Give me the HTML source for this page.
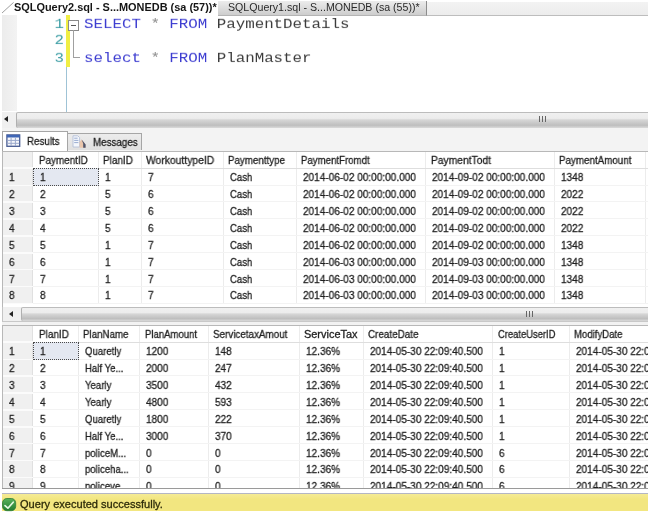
<!DOCTYPE html>
<html><head><meta charset="utf-8">
<style>
*{margin:0;padding:0;box-sizing:border-box}
html,body{width:650px;height:513px;overflow:hidden;background:#fff}
body{font-family:"Liberation Sans",sans-serif;position:relative;color:#222}
.abs{position:absolute}
.grid .c,.rtxt,#tab1,#tab2 span,.code,.ln,#status span{will-change:transform;filter:blur(0.3px)}
/* top tabs */
#tabbar{left:218px;top:1.8px;width:430px;height:13.8px;background:linear-gradient(#f3f3f3,#ececec);border-bottom:1.7px solid #bdbdbd}
#tab1{left:14.2px;top:1px;font-weight:bold;font-size:10.93px;line-height:13px;color:#151515;white-space:nowrap}
#tab2{left:218px;top:1.4px;width:208.8px;height:14.2px;background:linear-gradient(#ececec,#cdcdcd);border-right:1px solid #8c8c8c;border-bottom:1.4px solid #b4b4b4}
#tab2 span{position:absolute;left:10px;top:-0.4px;font-size:10.62px;line-height:13px;color:#2a2a2a;white-space:nowrap}
/* editor */
#edmargin{left:2px;top:15.2px;width:14.8px;height:96px;background:linear-gradient(90deg,#ececec,#f3f3f3)}
#ybar{left:66px;top:15px;width:4px;height:52px;background:#f0ee44}
#vline{left:66px;top:67px;width:1px;height:45px;background:#9fc3d6}
.ln{left:50px;width:14px;text-align:right;font-family:"Liberation Mono",monospace;font-size:15.8px;line-height:17px;color:#3f9fa6;transform:scaleY(0.85);transform-origin:0 12.7px}
.code{left:84px;font-family:"Liberation Mono",monospace;font-size:15.8px;line-height:17px;color:#3c3c3c;white-space:pre;transform:scaleY(0.85);transform-origin:0 12.7px}
.kw{color:#3c3cd0}
.op{color:#8a8a8a}
#cbox{left:68.3px;top:19.5px;width:11px;height:11px;border:1px solid #8a8a8a;background:#fff}
#cbox i{position:absolute;left:2px;top:4px;width:5px;height:1px;background:#555}
#cl1{left:73.4px;top:30px;width:1px;height:27.5px;background:#a0a0a0}
#cl2{left:73.4px;top:56.8px;width:6.5px;height:1px;background:#a0a0a0}
/* h scrollbars */
.hs{left:2px;width:646px;height:15.6px;background:#f0f0f0}
.hs .thumb{position:absolute;top:0;right:0;height:15.6px;border-top:1.6px solid #bcbcbc;border-left:1px solid #b0b0b0;border-radius:2px 0 0 2px;background:linear-gradient(#f0f0f0 0,#ececec 36%,#d6d6d6 46%,#bebebe 82%,#dadada 100%)}
.hs .arr{position:absolute;top:4px;width:0;height:0;border-top:3.5px solid transparent;border-bottom:3.5px solid transparent;border-right:4px solid #222}
.hs .grip{position:absolute;top:4px;width:9px;height:6px;background:repeating-linear-gradient(90deg,#666 0,#666 1.1px,transparent 1.1px,transparent 3.2px)}
/* result tabs */
#rtbar{left:2px;top:127.8px;width:646px;height:23.2px;background:#f3f3f3}
#rtab1{left:2px;top:131px;width:65.5px;height:20px;background:#fff;border:1px solid #a6a6a6;border-bottom:none}
#rtab2{left:67px;top:132.8px;width:74.5px;height:17.7px;background:linear-gradient(#ececec,#e0e0e0);border:1px solid #a6a6a6;border-bottom:none}
.rtxt{font-size:10.9px;line-height:12px;color:#1c1c1c;white-space:nowrap;transform:scaleX(0.9);transform-origin:0 0;-webkit-text-stroke:0.3px #222}
/* grid */
.grid{left:0;width:648px;overflow:hidden;background:#fff;font-size:10.9px;color:#1e1e1e}
.grid .c{position:absolute;white-space:nowrap;transform:scaleX(0.9);transform-origin:0 0;-webkit-text-stroke:0.3px #222}
.grid .d{transform:scaleX(0.923)}
.grid .t{transform:scaleX(0.882)}
.grid .v{position:absolute;top:0;width:1px;background:#ececec}
.grid .h{position:absolute;left:33px;width:615px;height:1px;background:#f3f3f3}
.grid .rh{position:absolute;left:2px;top:0;width:31px;background:#f0f0f0;border-right:1px solid #e0e0e0}
.grid .rsep{position:absolute;left:3px;width:30px;height:1.5px;background:#fbfbfb}
.grid .sel{position:absolute;background:#e4e8f1;border:1px dotted #4a4a4a}
.grid .bl{position:absolute;left:2px;top:0;width:1px;background:#b8b8b8}
.grid .bt{position:absolute;left:2px;top:0;width:646px;height:1px;background:#b8b8b8}
#gbot{left:2px;top:487.6px;width:646px;height:1px;background:#9a9a9a}
#sline{left:2px;top:492.8px;width:645.7px;height:1px;background:#b4b6c4}
#status{left:2px;top:493.8px;width:645.7px;height:17px;background:linear-gradient(#f5eb96,#f2e680 30%,#f2e680)}
#status span{position:absolute;left:17.8px;top:4.7px;font-size:11.05px;line-height:13px;color:#2e2c0a;white-space:nowrap;-webkit-text-stroke:0.3px #2e2c0a}
</style></head><body>
<div id="tabbar" class="abs"></div>
<svg class="abs" style="left:0;top:0" width="16" height="15"><line x1="2" y1="13" x2="13.6" y2="2.4" stroke="#a0a0a0" stroke-width="1"/></svg>
<div id="tab2" class="abs"><span>SQLQuery1.sql - S...MONEDB (sa (55))*</span></div>
<div id="tab1" class="abs">SQLQuery2.sql - S...MONEDB (sa (57))*</div>

<div id="edmargin" class="abs"></div>
<div id="ybar" class="abs"></div>
<div id="vline" class="abs"></div>
<div class="abs ln" style="top:16.2px">1</div>
<div class="abs ln" style="top:32.2px">2</div>
<div class="abs ln" style="top:49.9px">3</div>
<div class="abs code" style="top:16.2px"><span class="kw">SELECT</span> <span class="op">*</span> <span class="kw">FROM</span> PaymentDetails</div>
<div class="abs code" style="top:49.9px"><span class="kw">select</span> <span class="op">*</span> <span class="kw">FROM</span> PlanMaster</div>
<div id="cbox" class="abs"><i></i></div>
<div id="cl1" class="abs"></div><div id="cl2" class="abs"></div>

<div class="abs hs" style="top:112.4px"><div class="arr" style="left:2.3px"></div><div class="thumb" style="left:14.2px"></div><div class="grip" style="left:537px"></div></div>

<div id="rtbar" class="abs"></div>
<div id="rtab2" class="abs"></div>
<div id="rtab1" class="abs"></div>
<svg class="abs" style="left:6.1px;top:133.8px" width="15" height="14" viewBox="0 0 15 14">
<rect x="0.9" y="0.9" width="12.8" height="11.4" fill="#f6f7fb" stroke="#485c92" stroke-width="1.3"/>
<rect x="0.9" y="0.9" width="12.8" height="2.6" fill="#3f66b6"/>
<path d="M1.4 6.4H13.2M1.4 9.3H13.2M5.1 3.5V12M9.4 3.5V12" stroke="#9aa8cc" stroke-width="1" fill="none"/>
</svg>
<svg class="abs" style="left:72px;top:135px" width="15" height="14" viewBox="0 0 15 14">
<path d="M1 0.8H5.8L7.6 2.6V12H1Z" fill="#f4f7fc" stroke="#b4c0d8" stroke-width="0.9"/>
<path d="M2.2 3.2H5.6M2.2 5.4H6.4M2.2 7.6H6.4" stroke="#8fa4cc" stroke-width="0.9"/>
<path d="M7.6 12.8V7.2L9.6 4.6L13.6 9.4V12.8Z" fill="#eac6ac"/>
<path d="M9.6 4.6L13.6 9.4V12.8H11.2V8.6Z" fill="#4d546c"/>
</svg>
<div class="abs rtxt" style="left:27.2px;top:134.9px">Results</div>
<div class="abs rtxt" style="left:92.6px;top:136.3px">Messages</div>

<div class="abs grid" style="top:151px;height:155.60000000000002px">
<div class="rh" style="height:152.74px"></div>
<div class="rsep" style="top:16.20px"></div>
<div class="rsep" style="top:33.58px"></div>
<div class="rsep" style="top:50.46px"></div>
<div class="rsep" style="top:67.34px"></div>
<div class="rsep" style="top:84.22px"></div>
<div class="rsep" style="top:101.10px"></div>
<div class="rsep" style="top:117.98px"></div>
<div class="rsep" style="top:134.86px"></div>
<div class="rsep" style="top:151.74px"></div>
<div class="v" style="left:97.8px;height:152.74px"></div>
<div class="v" style="left:140.8px;height:152.74px"></div>
<div class="v" style="left:222.8px;height:152.74px"></div>
<div class="v" style="left:295.8px;height:152.74px"></div>
<div class="v" style="left:425.3px;height:152.74px"></div>
<div class="v" style="left:553.8px;height:152.74px"></div>
<div class="v" style="left:645px;height:152.74px"></div>
<div class="h" style="top:16.70px;background:#dedede"></div>
<div class="h" style="top:33.58px"></div>
<div class="h" style="top:50.46px"></div>
<div class="h" style="top:67.34px"></div>
<div class="h" style="top:84.22px"></div>
<div class="h" style="top:101.10px"></div>
<div class="h" style="top:117.98px"></div>
<div class="h" style="top:134.86px"></div>
<div class="h" style="top:151.74px"></div>
<div class="c" style="left:38.5px;top:0.6px;line-height:17.7px;transform:scaleX(0.905)">PaymentID</div>
<div class="c" style="left:103px;top:0.6px;line-height:17.7px;transform:scaleX(0.917)">PlanID</div>
<div class="c" style="left:146px;top:0.6px;line-height:17.7px;transform:scaleX(0.949)">WorkouttypeID</div>
<div class="c" style="left:228px;top:0.6px;line-height:17.7px;transform:scaleX(0.896)">Paymenttype</div>
<div class="c" style="left:301px;top:0.6px;line-height:17.7px;transform:scaleX(0.886)">PaymentFromdt</div>
<div class="c" style="left:430.5px;top:0.6px;line-height:17.7px;transform:scaleX(0.943)">PaymentTodt</div>
<div class="c" style="left:559px;top:0.6px;line-height:17.7px;transform:scaleX(0.900)">PaymentAmount</div>
<div class="sel" style="left:33.2px;top:17.30px;width:65.4px;height:18.08px"></div>
<div class="c d" style="left:8.6px;top:18.30px;line-height:16.88px">1</div>
<div class="c d" style="left:40.2px;top:18.30px;line-height:16.88px">1</div>
<div class="c d" style="left:104.7px;top:18.30px;line-height:16.88px">1</div>
<div class="c d" style="left:147.7px;top:18.30px;line-height:16.88px">7</div>
<div class="c t" style="left:229.7px;top:18.30px;line-height:16.88px">Cash</div>
<div class="c d" style="left:302.7px;top:18.30px;line-height:16.88px">2014-06-02 00:00:00.000</div>
<div class="c d" style="left:432.2px;top:18.30px;line-height:16.88px">2014-09-02 00:00:00.000</div>
<div class="c d" style="left:560.7px;top:18.30px;line-height:16.88px">1348</div>
<div class="c d" style="left:8.6px;top:35.18px;line-height:16.88px">2</div>
<div class="c d" style="left:40.2px;top:35.18px;line-height:16.88px">2</div>
<div class="c d" style="left:104.7px;top:35.18px;line-height:16.88px">5</div>
<div class="c d" style="left:147.7px;top:35.18px;line-height:16.88px">6</div>
<div class="c t" style="left:229.7px;top:35.18px;line-height:16.88px">Cash</div>
<div class="c d" style="left:302.7px;top:35.18px;line-height:16.88px">2014-06-02 00:00:00.000</div>
<div class="c d" style="left:432.2px;top:35.18px;line-height:16.88px">2014-09-02 00:00:00.000</div>
<div class="c d" style="left:560.7px;top:35.18px;line-height:16.88px">2022</div>
<div class="c d" style="left:8.6px;top:52.06px;line-height:16.88px">3</div>
<div class="c d" style="left:40.2px;top:52.06px;line-height:16.88px">3</div>
<div class="c d" style="left:104.7px;top:52.06px;line-height:16.88px">5</div>
<div class="c d" style="left:147.7px;top:52.06px;line-height:16.88px">6</div>
<div class="c t" style="left:229.7px;top:52.06px;line-height:16.88px">Cash</div>
<div class="c d" style="left:302.7px;top:52.06px;line-height:16.88px">2014-06-02 00:00:00.000</div>
<div class="c d" style="left:432.2px;top:52.06px;line-height:16.88px">2014-09-02 00:00:00.000</div>
<div class="c d" style="left:560.7px;top:52.06px;line-height:16.88px">2022</div>
<div class="c d" style="left:8.6px;top:68.94px;line-height:16.88px">4</div>
<div class="c d" style="left:40.2px;top:68.94px;line-height:16.88px">4</div>
<div class="c d" style="left:104.7px;top:68.94px;line-height:16.88px">5</div>
<div class="c d" style="left:147.7px;top:68.94px;line-height:16.88px">6</div>
<div class="c t" style="left:229.7px;top:68.94px;line-height:16.88px">Cash</div>
<div class="c d" style="left:302.7px;top:68.94px;line-height:16.88px">2014-06-02 00:00:00.000</div>
<div class="c d" style="left:432.2px;top:68.94px;line-height:16.88px">2014-09-02 00:00:00.000</div>
<div class="c d" style="left:560.7px;top:68.94px;line-height:16.88px">2022</div>
<div class="c d" style="left:8.6px;top:85.82px;line-height:16.88px">5</div>
<div class="c d" style="left:40.2px;top:85.82px;line-height:16.88px">5</div>
<div class="c d" style="left:104.7px;top:85.82px;line-height:16.88px">1</div>
<div class="c d" style="left:147.7px;top:85.82px;line-height:16.88px">7</div>
<div class="c t" style="left:229.7px;top:85.82px;line-height:16.88px">Cash</div>
<div class="c d" style="left:302.7px;top:85.82px;line-height:16.88px">2014-06-02 00:00:00.000</div>
<div class="c d" style="left:432.2px;top:85.82px;line-height:16.88px">2014-09-02 00:00:00.000</div>
<div class="c d" style="left:560.7px;top:85.82px;line-height:16.88px">1348</div>
<div class="c d" style="left:8.6px;top:102.70px;line-height:16.88px">6</div>
<div class="c d" style="left:40.2px;top:102.70px;line-height:16.88px">6</div>
<div class="c d" style="left:104.7px;top:102.70px;line-height:16.88px">1</div>
<div class="c d" style="left:147.7px;top:102.70px;line-height:16.88px">7</div>
<div class="c t" style="left:229.7px;top:102.70px;line-height:16.88px">Cash</div>
<div class="c d" style="left:302.7px;top:102.70px;line-height:16.88px">2014-06-03 00:00:00.000</div>
<div class="c d" style="left:432.2px;top:102.70px;line-height:16.88px">2014-09-03 00:00:00.000</div>
<div class="c d" style="left:560.7px;top:102.70px;line-height:16.88px">1348</div>
<div class="c d" style="left:8.6px;top:119.58px;line-height:16.88px">7</div>
<div class="c d" style="left:40.2px;top:119.58px;line-height:16.88px">7</div>
<div class="c d" style="left:104.7px;top:119.58px;line-height:16.88px">1</div>
<div class="c d" style="left:147.7px;top:119.58px;line-height:16.88px">7</div>
<div class="c t" style="left:229.7px;top:119.58px;line-height:16.88px">Cash</div>
<div class="c d" style="left:302.7px;top:119.58px;line-height:16.88px">2014-06-03 00:00:00.000</div>
<div class="c d" style="left:432.2px;top:119.58px;line-height:16.88px">2014-09-03 00:00:00.000</div>
<div class="c d" style="left:560.7px;top:119.58px;line-height:16.88px">1348</div>
<div class="c d" style="left:8.6px;top:136.46px;line-height:16.88px">8</div>
<div class="c d" style="left:40.2px;top:136.46px;line-height:16.88px">8</div>
<div class="c d" style="left:104.7px;top:136.46px;line-height:16.88px">1</div>
<div class="c d" style="left:147.7px;top:136.46px;line-height:16.88px">7</div>
<div class="c t" style="left:229.7px;top:136.46px;line-height:16.88px">Cash</div>
<div class="c d" style="left:302.7px;top:136.46px;line-height:16.88px">2014-06-03 00:00:00.000</div>
<div class="c d" style="left:432.2px;top:136.46px;line-height:16.88px">2014-09-03 00:00:00.000</div>
<div class="c d" style="left:560.7px;top:136.46px;line-height:16.88px">1348</div>
<div class="bl" style="height:155.60000000000002px"></div><div class="bt"></div>
</div>
<div class="abs" style="left:2px;top:322px;width:646px;height:3px;background:#f2f2f2"></div>
<div class="abs hs" style="top:307px;height:15px;border-left:1px solid #c4c4c4;border-bottom:1px solid #c8c8c8;left:2px;width:646px"><div class="arr" style="left:6px"></div><div class="thumb" style="left:17.5px;height:14px;top:0.4px;border-radius:2px 0 0 2px"></div><div class="grip" style="left:522.5px"></div></div>
<div class="abs grid" style="top:325px;height:163.5px">
<div class="rh" style="height:163.50px"></div>
<div class="rsep" style="top:16.20px"></div>
<div class="rsep" style="top:33.58px"></div>
<div class="rsep" style="top:50.46px"></div>
<div class="rsep" style="top:67.34px"></div>
<div class="rsep" style="top:84.22px"></div>
<div class="rsep" style="top:101.10px"></div>
<div class="rsep" style="top:117.98px"></div>
<div class="rsep" style="top:134.86px"></div>
<div class="rsep" style="top:151.74px"></div>
<div class="rsep" style="top:168.62px"></div>
<div class="v" style="left:77.8px;height:163.50px"></div>
<div class="v" style="left:139.3px;height:163.50px"></div>
<div class="v" style="left:207.8px;height:163.50px"></div>
<div class="v" style="left:298.8px;height:163.50px"></div>
<div class="v" style="left:362.8px;height:163.50px"></div>
<div class="v" style="left:492.3px;height:163.50px"></div>
<div class="v" style="left:568.8px;height:163.50px"></div>
<div class="h" style="top:16.70px;background:#dedede"></div>
<div class="h" style="top:33.58px"></div>
<div class="h" style="top:50.46px"></div>
<div class="h" style="top:67.34px"></div>
<div class="h" style="top:84.22px"></div>
<div class="h" style="top:101.10px"></div>
<div class="h" style="top:117.98px"></div>
<div class="h" style="top:134.86px"></div>
<div class="h" style="top:151.74px"></div>
<div class="h" style="top:168.62px"></div>
<div class="c" style="left:38.5px;top:0.6px;line-height:17.7px;transform:scaleX(0.917)">PlanID</div>
<div class="c" style="left:83px;top:0.6px;line-height:17.7px;transform:scaleX(0.894)">PlanName</div>
<div class="c" style="left:144.5px;top:0.6px;line-height:17.7px;transform:scaleX(0.877)">PlanAmount</div>
<div class="c" style="left:213px;top:0.6px;line-height:17.7px;transform:scaleX(0.904)">ServicetaxAmout</div>
<div class="c" style="left:304px;top:0.6px;line-height:17.7px;transform:scaleX(1.004)">ServiceTax</div>
<div class="c" style="left:368px;top:0.6px;line-height:17.7px;transform:scaleX(0.906)">CreateDate</div>
<div class="c" style="left:497.5px;top:0.6px;line-height:17.7px;transform:scaleX(0.863)">CreateUserID</div>
<div class="c" style="left:574px;top:0.6px;line-height:17.7px;transform:scaleX(0.880)">ModifyDate</div>
<div class="sel" style="left:33.2px;top:17.30px;width:45.4px;height:18.08px"></div>
<div class="c d" style="left:8.6px;top:18.30px;line-height:16.88px">1</div>
<div class="c d" style="left:40.2px;top:18.30px;line-height:16.88px">1</div>
<div class="c t" style="left:84.7px;top:18.30px;line-height:16.88px">Quaretly</div>
<div class="c d" style="left:146.2px;top:18.30px;line-height:16.88px">1200</div>
<div class="c d" style="left:214.7px;top:18.30px;line-height:16.88px">148</div>
<div class="c d" style="left:305.7px;top:18.30px;line-height:16.88px">12.36%</div>
<div class="c d" style="left:369.7px;top:18.30px;line-height:16.88px">2014-05-30 22:09:40.500</div>
<div class="c d" style="left:499.2px;top:18.30px;line-height:16.88px">1</div>
<div class="c d" style="left:575.7px;top:18.30px;line-height:16.88px">2014-05-30 22:09:40.500</div>
<div class="c d" style="left:8.6px;top:35.18px;line-height:16.88px">2</div>
<div class="c d" style="left:40.2px;top:35.18px;line-height:16.88px">2</div>
<div class="c t" style="left:84.7px;top:35.18px;line-height:16.88px">Half Ye...</div>
<div class="c d" style="left:146.2px;top:35.18px;line-height:16.88px">2000</div>
<div class="c d" style="left:214.7px;top:35.18px;line-height:16.88px">247</div>
<div class="c d" style="left:305.7px;top:35.18px;line-height:16.88px">12.36%</div>
<div class="c d" style="left:369.7px;top:35.18px;line-height:16.88px">2014-05-30 22:09:40.500</div>
<div class="c d" style="left:499.2px;top:35.18px;line-height:16.88px">1</div>
<div class="c d" style="left:575.7px;top:35.18px;line-height:16.88px">2014-05-30 22:09:40.500</div>
<div class="c d" style="left:8.6px;top:52.06px;line-height:16.88px">3</div>
<div class="c d" style="left:40.2px;top:52.06px;line-height:16.88px">3</div>
<div class="c t" style="left:84.7px;top:52.06px;line-height:16.88px">Yearly</div>
<div class="c d" style="left:146.2px;top:52.06px;line-height:16.88px">3500</div>
<div class="c d" style="left:214.7px;top:52.06px;line-height:16.88px">432</div>
<div class="c d" style="left:305.7px;top:52.06px;line-height:16.88px">12.36%</div>
<div class="c d" style="left:369.7px;top:52.06px;line-height:16.88px">2014-05-30 22:09:40.500</div>
<div class="c d" style="left:499.2px;top:52.06px;line-height:16.88px">1</div>
<div class="c d" style="left:575.7px;top:52.06px;line-height:16.88px">2014-05-30 22:09:40.500</div>
<div class="c d" style="left:8.6px;top:68.94px;line-height:16.88px">4</div>
<div class="c d" style="left:40.2px;top:68.94px;line-height:16.88px">4</div>
<div class="c t" style="left:84.7px;top:68.94px;line-height:16.88px">Yearly</div>
<div class="c d" style="left:146.2px;top:68.94px;line-height:16.88px">4800</div>
<div class="c d" style="left:214.7px;top:68.94px;line-height:16.88px">593</div>
<div class="c d" style="left:305.7px;top:68.94px;line-height:16.88px">12.36%</div>
<div class="c d" style="left:369.7px;top:68.94px;line-height:16.88px">2014-05-30 22:09:40.500</div>
<div class="c d" style="left:499.2px;top:68.94px;line-height:16.88px">1</div>
<div class="c d" style="left:575.7px;top:68.94px;line-height:16.88px">2014-05-30 22:09:40.500</div>
<div class="c d" style="left:8.6px;top:85.82px;line-height:16.88px">5</div>
<div class="c d" style="left:40.2px;top:85.82px;line-height:16.88px">5</div>
<div class="c t" style="left:84.7px;top:85.82px;line-height:16.88px">Quaretly</div>
<div class="c d" style="left:146.2px;top:85.82px;line-height:16.88px">1800</div>
<div class="c d" style="left:214.7px;top:85.82px;line-height:16.88px">222</div>
<div class="c d" style="left:305.7px;top:85.82px;line-height:16.88px">12.36%</div>
<div class="c d" style="left:369.7px;top:85.82px;line-height:16.88px">2014-05-30 22:09:40.500</div>
<div class="c d" style="left:499.2px;top:85.82px;line-height:16.88px">1</div>
<div class="c d" style="left:575.7px;top:85.82px;line-height:16.88px">2014-05-30 22:09:40.500</div>
<div class="c d" style="left:8.6px;top:102.70px;line-height:16.88px">6</div>
<div class="c d" style="left:40.2px;top:102.70px;line-height:16.88px">6</div>
<div class="c t" style="left:84.7px;top:102.70px;line-height:16.88px">Half Ye...</div>
<div class="c d" style="left:146.2px;top:102.70px;line-height:16.88px">3000</div>
<div class="c d" style="left:214.7px;top:102.70px;line-height:16.88px">370</div>
<div class="c d" style="left:305.7px;top:102.70px;line-height:16.88px">12.36%</div>
<div class="c d" style="left:369.7px;top:102.70px;line-height:16.88px">2014-05-30 22:09:40.500</div>
<div class="c d" style="left:499.2px;top:102.70px;line-height:16.88px">1</div>
<div class="c d" style="left:575.7px;top:102.70px;line-height:16.88px">2014-05-30 22:09:40.500</div>
<div class="c d" style="left:8.6px;top:119.58px;line-height:16.88px">7</div>
<div class="c d" style="left:40.2px;top:119.58px;line-height:16.88px">7</div>
<div class="c t" style="left:84.7px;top:119.58px;line-height:16.88px">policeM...</div>
<div class="c d" style="left:146.2px;top:119.58px;line-height:16.88px">0</div>
<div class="c d" style="left:214.7px;top:119.58px;line-height:16.88px">0</div>
<div class="c d" style="left:305.7px;top:119.58px;line-height:16.88px">12.36%</div>
<div class="c d" style="left:369.7px;top:119.58px;line-height:16.88px">2014-05-30 22:09:40.500</div>
<div class="c d" style="left:499.2px;top:119.58px;line-height:16.88px">6</div>
<div class="c d" style="left:575.7px;top:119.58px;line-height:16.88px">2014-05-30 22:09:40.500</div>
<div class="c d" style="left:8.6px;top:136.46px;line-height:16.88px">8</div>
<div class="c d" style="left:40.2px;top:136.46px;line-height:16.88px">8</div>
<div class="c t" style="left:84.7px;top:136.46px;line-height:16.88px">policeha...</div>
<div class="c d" style="left:146.2px;top:136.46px;line-height:16.88px">0</div>
<div class="c d" style="left:214.7px;top:136.46px;line-height:16.88px">0</div>
<div class="c d" style="left:305.7px;top:136.46px;line-height:16.88px">12.36%</div>
<div class="c d" style="left:369.7px;top:136.46px;line-height:16.88px">2014-05-30 22:09:40.500</div>
<div class="c d" style="left:499.2px;top:136.46px;line-height:16.88px">6</div>
<div class="c d" style="left:575.7px;top:136.46px;line-height:16.88px">2014-05-30 22:09:40.500</div>
<div class="c d" style="left:8.6px;top:153.34px;line-height:16.88px">9</div>
<div class="c d" style="left:40.2px;top:153.34px;line-height:16.88px">9</div>
<div class="c t" style="left:84.7px;top:153.34px;line-height:16.88px">policeve...</div>
<div class="c d" style="left:146.2px;top:153.34px;line-height:16.88px">0</div>
<div class="c d" style="left:214.7px;top:153.34px;line-height:16.88px">0</div>
<div class="c d" style="left:305.7px;top:153.34px;line-height:16.88px">12.36%</div>
<div class="c d" style="left:369.7px;top:153.34px;line-height:16.88px">2014-05-30 22:09:40.500</div>
<div class="c d" style="left:499.2px;top:153.34px;line-height:16.88px">6</div>
<div class="c d" style="left:575.7px;top:153.34px;line-height:16.88px">2014-05-30 22:09:40.500</div>
<div class="bl" style="height:163.5px"></div><div class="bt"></div>
</div>
<div id="gbot" class="abs"></div>
<div id="sline" class="abs"></div>
<div id="status" class="abs"><span>Query executed successfully.</span></div>
<svg class="abs" style="left:2.2px;top:497.8px" width="15" height="14" viewBox="0 0 15 14">
<defs><linearGradient id="gg" x1="0" y1="0" x2="0" y2="1"><stop offset="0" stop-color="#58b25c"/><stop offset="1" stop-color="#227c30"/></linearGradient></defs>
<rect x="0.5" y="0.5" width="13.2" height="12.2" rx="4.4" ry="4.4" fill="url(#gg)" stroke="#2c7e38" stroke-width="0.8"/>
<path d="M3 7.6L5.9 10.2L11.2 4.2" stroke="#e4f8e2" stroke-width="1.7" fill="none" stroke-linecap="round" stroke-linejoin="round"/>
</svg>
</body></html>
